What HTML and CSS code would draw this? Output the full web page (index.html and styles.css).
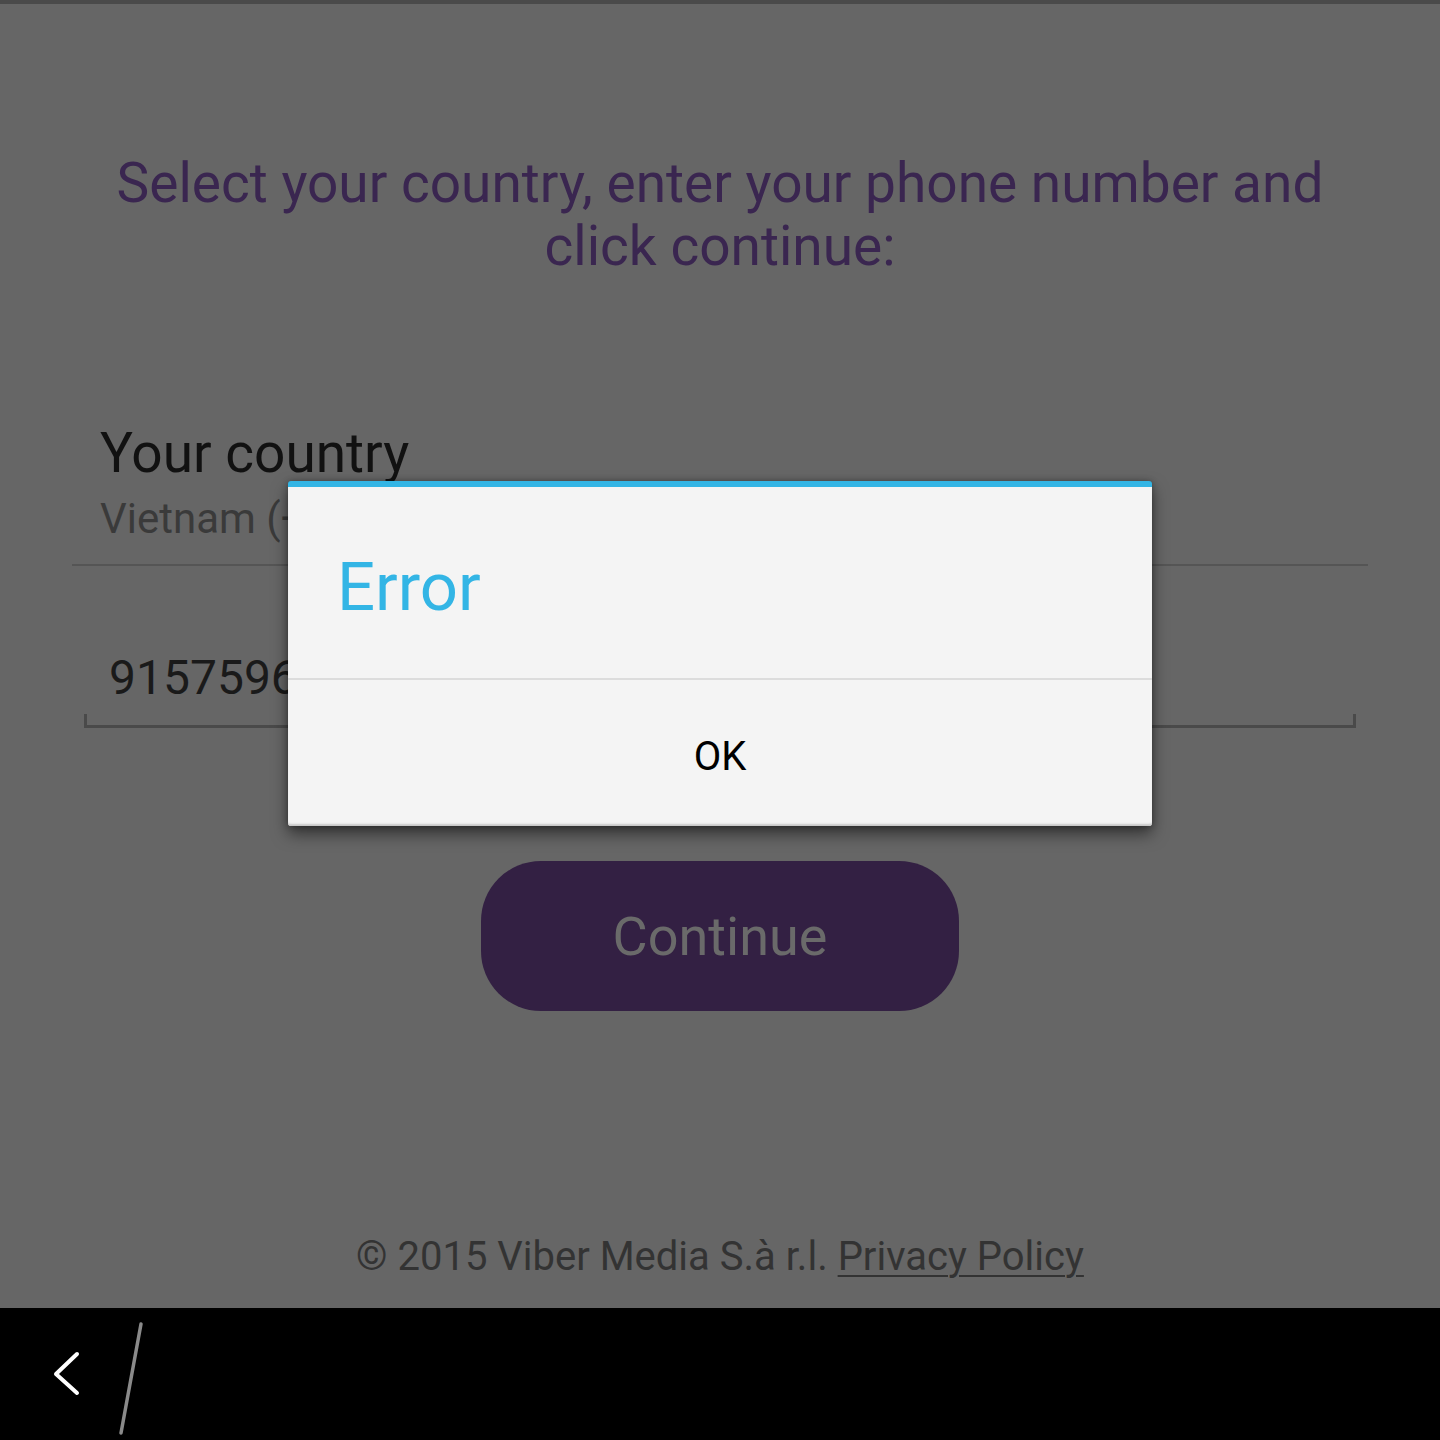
FILE: index.html
```html
<!DOCTYPE html>
<html lang="en">

<head>
    <meta charset="utf-8">
    <meta name="viewport" content="width=device-width, initial-scale=1.0">
    <title>Viber - Activation</title>
    <link rel="stylesheet" href="styles.css">
</head>

<body>
    <main class="screen">
        <h1 class="intro">Select your country, enter your phone number and click continue:</h1>

        <section class="country">
            <h2>Your country</h2>
            <p class="country-value">Vietnam (+84)</p>
        </section>

        <section class="phone">
            <p class="phone-value">915759612</p>
        </section>

        <button class="continue">Continue</button>

        <footer class="legal">
            <p>© 2015 Viber Media S.à r.l. <u>Privacy Policy</u></p>
        </footer>

        <div class="dialog">
            <h3 class="dialog-title">Error</h3>
            <button class="dialog-ok">OK</button>
        </div>
    </main>

    <nav class="navbar">
        <svg class="back" width="40" height="60" viewBox="0 0 40 60">
            <path d="M31 6 L10 26 L31 45" fill="none" stroke="#fff" stroke-width="4" stroke-linecap="round" stroke-linejoin="round"/>
        </svg>
        <svg class="slash" width="40" height="120" viewBox="0 0 40 120">
            <line x1="35" y1="3" x2="15" y2="112" stroke="#8a8a8a" stroke-width="3.5" stroke-linecap="round"/>
        </svg>
    </nav>
</body>

</html>
```

FILE: styles.css
```css
* {
    box-sizing: border-box;
}

html,
body {
    margin: 0;
    padding: 0;
    background: #000;
    font-family: Roboto, "Noto Sans", sans-serif;
}

.screen {
    position: relative;
    height: 1308px;
    background: #666666;
    border-top: 4px solid #4a4a4a;
    display: flex;
    flex-direction: column;
    align-items: center;
}

.intro {
    margin: 148px 0 0 0;
    width: 1300px;
    text-align: center;
    font-weight: 400;
    font-size: 55px;
    line-height: 63px;
    color: #3a2650;
}

.country {
    align-self: stretch;
    margin: 145px 72px 0 72px;
    padding: 0 0 21px 28px;
    border-bottom: 2px solid #555555;
}

.country h2 {
    margin: 0;
    font-weight: 400;
    font-size: 55px;
    line-height: 60px;
    color: #111111;
}

.country-value {
    margin: 12px 0 0 0;
    font-size: 42px;
    line-height: 48px;
    color: #3a3a3a;
}

.phone {
    align-self: stretch;
    margin: 60px 84px 0 84px;
    padding: 0 0 21px 22px;
    border: 3px solid #4a4a4a;
    border-top: none;
    border-image: linear-gradient(to bottom, transparent 0, transparent calc(100% - 12px), #4a4a4a calc(100% - 12px)) 1;
}

.phone-value {
    margin: 0;
    padding-top: 26px;
    font-size: 48px;
    line-height: 52px;
    color: #1a1a1a;
}

.continue {
    margin-top: 133px;
    width: 478px;
    height: 150px;
    border: none;
    border-radius: 60px;
    background: #332043;
    color: #6a6a6a;
    font-family: Roboto, "Noto Sans", sans-serif;
    font-size: 54px;
}

.legal {
    margin-top: auto;
    padding-bottom: 27px;
}

.legal p {
    margin: 0;
    font-size: 40px;
    line-height: 48px;
    color: #333333;
}

.legal u {
    text-decoration-thickness: 2px;
    text-underline-offset: 5px;
}

.dialog {
    position: absolute;
    left: 288px;
    top: 477px;
    width: 864px;
    height: 345px;
    background: #f4f4f4;
    border-top: 6px solid #33b5e5;
    border-radius: 3px;
    box-shadow: inset 0 -3px 2px -1px #c8c8c8, 0 8px 16px rgba(0, 0, 0, 0.5), 0 0 6px rgba(0, 0, 0, 0.3);
    display: flex;
    flex-direction: column;
}

.dialog-title {
    margin: 0;
    height: 193px;
    padding: 62px 0 0 49px;
    border-bottom: 2px solid #dcdcdc;
    font-weight: 400;
    font-size: 67px;
    line-height: 76px;
    color: #33b5e5;
}

.dialog-ok {
    flex: 1;
    padding-top: 8px;
    border: none;
    background: transparent;
    font-family: Roboto, "Noto Sans", sans-serif;
    font-size: 40px;
    color: #000;
}

.navbar {
    height: 132px;
    background: #000;
    display: flex;
    align-items: flex-start;
}

.back {
    margin: 40px 0 0 46px;
}

.slash {
    margin: 13px 0 0 20px;
}
```
